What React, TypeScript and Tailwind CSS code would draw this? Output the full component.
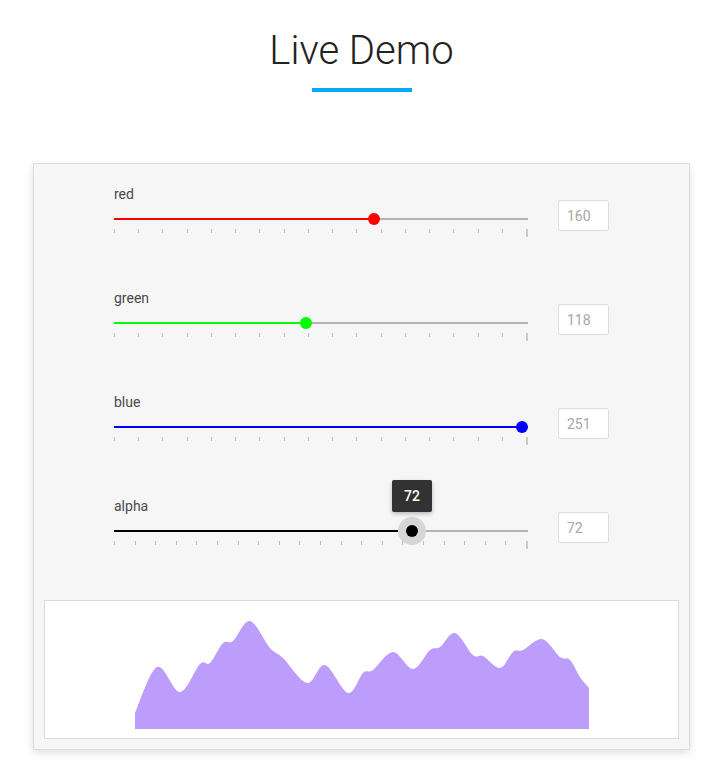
import { useState } from 'react';

type Channel = {
  name: string;
  value: number;
  max: number;
  step: number;
  color: string;
};

const CHANNELS: Channel[] = [
  { name: 'red', value: 160, max: 255, step: 15, color: '#ff0000' },
  { name: 'green', value: 118, max: 255, step: 15, color: '#00ff00' },
  { name: 'blue', value: 251, max: 255, step: 15, color: '#0000ff' },
  { name: 'alpha', value: 72, max: 100, step: 5, color: '#000000' },
];

// wave outline, in chart box coordinates
const WAVE: [number, number][] = [
  [90, 112], [112, 66], [135, 91], [155, 63], [165, 62], [178, 42], [188, 40],
  [205, 20], [225, 47], [238, 57], [262, 82], [280, 64], [303, 92], [318, 72],
  [328, 69], [348, 51], [368, 68], [385, 49], [395, 46], [410, 32], [428, 54],
  [438, 55], [455, 67], [468, 51], [478, 49], [497, 38], [515, 56], [525, 59],
  [535, 76], [544, 87],
];

function smoothPath(points: [number, number][], baseline: number): string {
  const [x0, y0] = points[0]!;
  let d = `M${x0},${baseline} L${x0},${y0}`;
  for (let i = 0; i < points.length - 1; i++) {
    const p0 = points[i - 1] ?? points[i]!;
    const p1 = points[i]!;
    const p2 = points[i + 1]!;
    const p3 = points[i + 2] ?? p2;
    const c1x = p1[0] + (p2[0] - p0[0]) / 6;
    const c1y = p1[1] + (p2[1] - p0[1]) / 6;
    const c2x = p2[0] - (p3[0] - p1[0]) / 6;
    const c2y = p2[1] - (p3[1] - p1[1]) / 6;
    d += ` C${c1x},${c1y} ${c2x},${c2y} ${p2[0]},${p2[1]}`;
  }
  const last = points[points.length - 1]!;
  d += ` L${last[0]},${baseline} Z`;
  return d;
}

function SliderRow({ channel, active }: { channel: Channel; active?: boolean }) {
  const [value] = useState(channel.value);
  const pct = (value / channel.max) * 100;
  const tickCount = channel.max / channel.step + 1;

  return (
    <div className="flex h-[104px]">
      <div className="flex w-[414px] flex-col">
        <span className="h-5 text-sm leading-5 text-[#4a4a4a]">{channel.name}</span>
        <div className="pt-[14px]">
          <div className="relative h-[2px] bg-[#b5b5b5]">
            <div className="h-full" style={{ width: `${pct}%`, background: channel.color }} />
            {active && (
              <>
                <div
                  className="absolute top-1/2 h-[28px] w-[28px] -translate-x-1/2 -translate-y-1/2 rounded-full bg-[#d6d6d6]"
                  style={{ left: `${pct}%` }}
                />
                <div
                  className="absolute bottom-[20px] flex h-8 w-10 -translate-x-1/2 items-center justify-center rounded-[2px] bg-[#323232] text-sm font-medium text-white shadow-[0_2px_4px_rgba(0,0,0,0.25)]"
                  style={{ left: `${pct}%` }}
                >
                  {value}
                </div>
              </>
            )}
            <div
              className="absolute top-1/2 h-3 w-3 -translate-x-1/2 -translate-y-1/2 rounded-full"
              style={{ left: `${pct}%`, background: channel.color }}
            />
          </div>
          <div className="mt-[9px] flex items-start justify-between">
            {Array.from({ length: tickCount }, (_, i) =>
              i === tickCount - 1 ? (
                <span key={i} className="h-2 w-[2px] bg-[#cacaca]" />
              ) : (
                <span key={i} className="h-1 w-px bg-[#bdbdbd]" />
              ),
            )}
          </div>
        </div>
      </div>
      <input
        readOnly
        value={value}
        className="ml-[30px] mt-4 h-[31px] w-[51px] rounded-[2px] border border-[#dedede] bg-white px-2 text-sm text-[#a6a6a6] outline-none"
      />
    </div>
  );
}

export default function App() {
  return (
    <div className="min-h-[774px] bg-white pt-[27px] font-['Roboto',sans-serif]">
      <h1 className="text-center text-[40px] font-light leading-[48px] text-[#222]">Live Demo</h1>
      <div className="mx-auto mt-[13px] h-1 w-[100px] bg-[#03a9f4]" />

      <div className="mx-auto mt-[71px] w-[657px] border border-[#dcdcdc] bg-[#f6f6f6] px-[10px] pb-[10px] pt-5 shadow-[0_3px_8px_rgba(0,0,0,0.12)]">
        <div className="px-[70px]">
          {CHANNELS.map((channel) => (
            <SliderRow key={channel.name} channel={channel} active={channel.name === 'alpha'} />
          ))}
        </div>
        <div className="h-[139px] border border-[#dcdcdc] bg-white">
          <svg width="634" height="137" viewBox="0 0 634 137" className="block">
            <path d={smoothPath(WAVE, 128)} fill="#bc9dfc" />
          </svg>
        </div>
      </div>
    </div>
  );
}
